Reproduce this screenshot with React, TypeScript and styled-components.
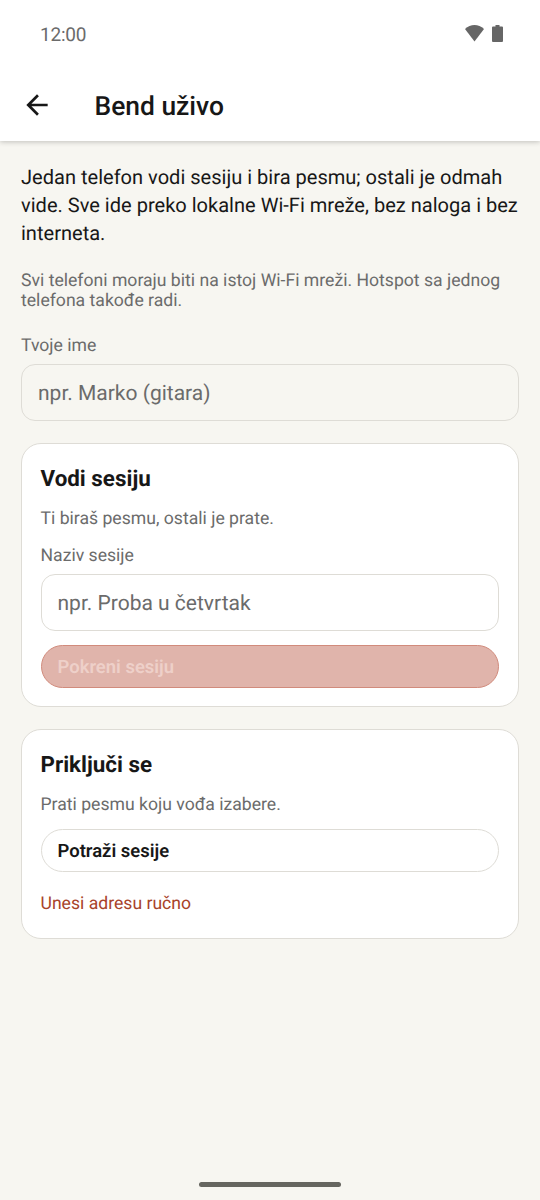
import React from 'react';
import styled, { createGlobalStyle } from 'styled-components';

const Global = createGlobalStyle`
  * { box-sizing: border-box; }
  body { margin: 0; background: #f7f6f1; font-family: Roboto, "Noto Sans", sans-serif; color: #171717; text-rendering: geometricPrecision; }
`;
const Screen = styled.div`width: 540px; height: 1200px; display: flex; flex-direction: column; background: #f7f6f1; overflow: hidden;`;
const Top = styled.header`background: #fff; height: 141px; box-shadow: 0 1px 5px rgba(0,0,0,.22); flex: none;`;
const StatusBar = styled.div`height: 69px; padding: 0 37px 0 40px; display: flex; align-items: center; justify-content: space-between; color: #6b6b6b; font-size: 19px; letter-spacing: -.2px;`;
const StatusIcons = styled.div`display: flex; align-items: center; gap: 8px; padding-bottom: 2px;`;
const AppBar = styled.div`height: 72px; padding-left: 21px; display: flex; align-items: center;`;
const Title = styled.h1`margin: 4px 0 0 41.5px; font-size: 26.4px; font-weight: 500; line-height: 32px;`;
const Body = styled.main`flex: 1; padding: 22px 21px 0; display: flex; flex-direction: column;`;
const Lead = styled.p`margin: 0; font-size: 20.06px; line-height: 28px; white-space: nowrap;`;
const Text = styled.p<{ $top?: number }>`margin: ${p => p.$top ?? 0}px 0 0; font-size: 17.62px; line-height: 20px; color: #6b6b6b; white-space: nowrap;`;
const Field = styled.input`display: block; width: 100%; height: 57px; margin-top: 8px; padding: 3px 16px 0; border: 1px solid #dedcd6; border-radius: 14px; background: transparent; font: 400 21px Roboto, sans-serif; text-rendering: inherit; outline: none; &::placeholder { color: #6b6b6b; opacity: 1; }`;
const Card = styled.section<{ $height: number }>`height: ${p => p.$height}px; margin-top: 22px; padding: 21px 19px 21px 18.5px; border: 1px solid #dedcd6; border-radius: 20px; background: #fff;`;
const CardTitle = styled.h2`margin: 0; font-size: 22.4px; line-height: 28px; font-weight: 700;`;
const Button = styled.button<{ $muted?: boolean }>`display: block; width: 100%; height: 43.5px; margin-top: 13.7px; padding: 1px 16px 0; border: 1px solid ${p => p.$muted ? '#d18b7c' : '#dedcd6'}; border-radius: 22px; background: ${p => p.$muted ? '#e0b4ab' : '#fff'}; color: ${p => p.$muted ? '#eed0c9' : '#171717'}; text-align: left; font: 600 18.45px Roboto, sans-serif; text-rendering: inherit;`;
const Link = styled.a`display: block; margin-top: 21.8px; color: #a8432a; font-size: 17.6px; line-height: 21px;`;
const HomeBar = styled.div`width: 142px; height: 5px; margin: 0 auto 13px; border-radius: 3px; background: #666660;`;

export default function App() {
  return <><Global /><Screen>
    <Top>
      <StatusBar><span>12:00</span><StatusIcons>
        <svg width="19" height="17" viewBox="0 0 19 17"><path d="M0 4C5.5-1.200 13.500-1.200 19 4L9.500 16.500Z" fill="#666" /></svg>
        <svg width="11" height="17" viewBox="0 0 11 17"><path d="M3.500 0h4v1.500H10q1 0 1 1V16q0 1-1 1H1q-1 0-1-1V2.500q0-1 1-1h2.500Z" fill="#666" /></svg>
      </StatusIcons></StatusBar>
      <AppBar><svg width="32" height="32" viewBox="0 0 24 24" fill="#171717"><path d="M20 11H7.83l5.59-5.59L12 4l-8 8 8 8 1.410-1.410L7.830 13H20v-2z" /></svg><Title>Bend uživo</Title></AppBar>
    </Top>
    <Body>
      <Lead>Jedan telefon vodi sesiju i bira pesmu; ostali je odmah<br />vide. Sve ide preko lokalne Wi-Fi mreže, bez naloga i bez<br />interneta.</Lead>
      <Text $top={24}>Svi telefoni moraju biti na istoj Wi-Fi mreži. Hotspot sa jednog<br />telefona takođe radi.</Text>
      <Text $top={25}>Tvoje ime</Text>
      <Field placeholder="npr. Marko (gitara)" />
      <Card $height={264}><CardTitle>Vodi sesiju</CardTitle><Text $top={16}>Ti biraš pesmu, ostali je prate.</Text><Text $top={17}>Naziv sesije</Text><Field placeholder="npr. Proba u četvrtak" /><Button $muted disabled>Pokreni sesiju</Button></Card>
      <Card $height={210}><CardTitle>Priključi se</CardTitle><Text $top={16}>Prati pesmu koju vođa izabere.</Text><Button>Potraži sesije</Button><Link>Unesi adresu ručno</Link></Card>
    </Body>
    <HomeBar />
  </Screen></>;
}
